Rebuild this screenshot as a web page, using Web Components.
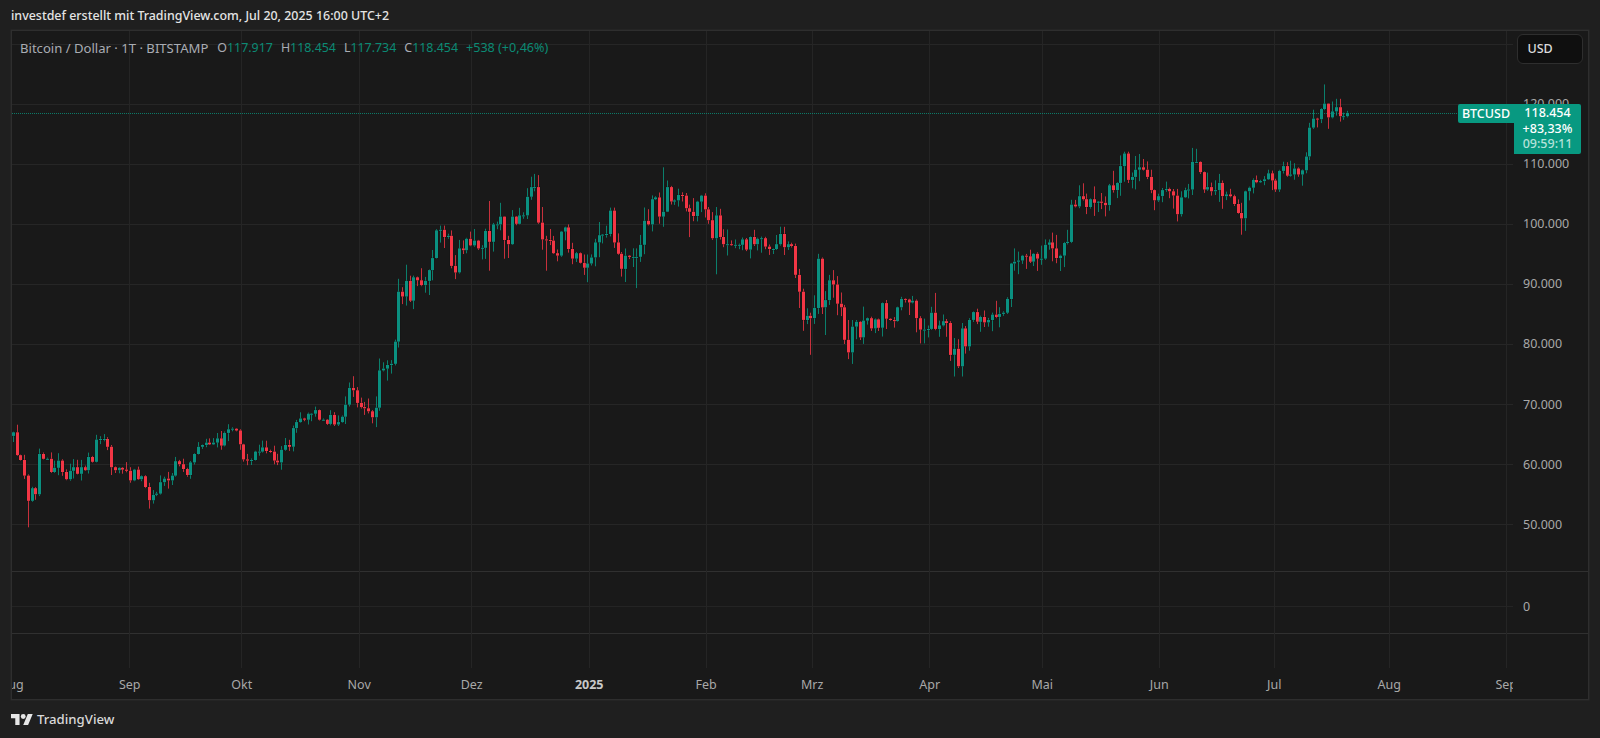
<!DOCTYPE html>
<html lang="de"><head><meta charset="utf-8"><title>BTCUSD</title>
<style>html,body{margin:0;padding:0;background:#1f1f1f;height:100%;overflow:hidden}</style>
</head><body>
<tv-page>
  <tv-header slot="header">investdef erstellt mit TradingView.com, Jul 20, 2025 16:00 UTC+2</tv-header>
  <tv-chart slot="chart"></tv-chart>
  <tv-footer slot="footer"></tv-footer>
</tv-page>
<script>
const FONT='"Noto Sans","Open Sans",sans-serif';
function shadow(el,html){el.attachShadow({mode:'open'}).innerHTML=html;}

customElements.define('tv-page',class extends HTMLElement{constructor(){super();shadow(this,`<style>
:host{display:flex;flex-direction:column;width:1600px;height:738px;box-sizing:border-box;padding:0 11px 0 11px;background:#1f1f1f;font-family:${FONT}}
</style><slot name="header"></slot><slot name="chart"></slot><slot name="footer"></slot>`);}});

customElements.define('tv-header',class extends HTMLElement{constructor(){super();shadow(this,`<style>
:host{display:flex;align-items:center;height:30px;flex:none;font-size:12.45px;font-weight:500;color:#e4e4e4;white-space:nowrap;padding-top:.5px;box-sizing:border-box}
</style><slot></slot>`);}});

customElements.define('tv-footer',class extends HTMLElement{constructor(){super();shadow(this,`<style>
:host{display:flex;align-items:center;gap:4px;flex:none;height:38px;color:#d9d9d9;font-size:13.2px;font-weight:500}
svg{display:block;width:22px;height:11px;fill:#e6e6e6}
</style><svg viewBox="0 4 36 18" aria-hidden="true"><path d="M14 22H7V11H0V4h14v18zM28 22h-8l7.5-18h8L28 22z"/><circle cx="20" cy="8" r="4"/></svg><span>TradingView</span>`);}});

customElements.define('tv-legend',class extends HTMLElement{constructor(){super();shadow(this,`<style>
:host{position:absolute;left:8px;top:9px;display:flex;gap:8px;font-size:12.4px;line-height:16px;color:#a9acb3;white-space:nowrap}
.n{font-size:13.1px;margin-right:1px}
b{font-weight:400;color:#0b8a74}
b.c{font-size:12.6px}
</style><span class="n">Bitcoin / Dollar · 1T · BITSTAMP</span><span>O<b>117.917</b></span><span>H<b>118.454</b></span><span>L<b>117.734</b></span><span>C<b>118.454</b></span><b class="c">+538 (+0,46%)</b>`);}});

customElements.define('tv-last-price',class extends HTMLElement{constructor(){super();shadow(this,`<style>
:host{position:absolute;left:-55px;top:72.5px;display:flex;align-items:flex-start;font-size:12.5px;font-weight:500;color:#fff;white-space:nowrap}
.tag{width:56px;height:19px;background:#089981;border-radius:2px 0 0 2px;display:flex;align-items:center;justify-content:center;box-sizing:border-box}
.box{width:67px;height:50px;background:#089981;border-radius:0 2px 2px 0;display:flex;flex-direction:column;align-items:center;justify-content:center;line-height:15.5px}
.t{color:#b5e2da}
</style><div class="tag">BTCUSD</div><div class="box"><span>118.454</span><span>+83,33%</span><span class="t">09:59:11</span></div>`);}});

customElements.define('tv-currency',class extends HTMLElement{constructor(){super();shadow(this,`<style>
:host{position:absolute;left:4px;top:2.5px;width:66px;height:30px;box-sizing:border-box;background:#0f0f0f;border:1.5px solid #2e2e2e;border-radius:6px;display:flex;align-items:center;padding-left:9.5px;font-size:12.5px;font-weight:500;color:#dcdcdc}
</style><slot></slot>`);}});

customElements.define('tv-price-axis',class extends HTMLElement{constructor(){super();
const t=['120.000','110.000','100.000','90.000','80.000','70.000','60.000','50.000'];
shadow(this,`<style>
:host{position:relative;display:flex;flex-direction:column;height:100%;font-size:12.5px;color:#a8a8a8;padding-left:10px;box-sizing:border-box}
.top{height:42.5px;flex:none}
.tick{height:60.1px;flex:none;display:flex;align-items:center}
.gap{height:16.7px;flex:none}
.sep{height:63.5px;margin-left:-10px;padding:8px 0 0 10px;flex:none;box-sizing:border-box;border-top:1px solid #303030;border-bottom:1px solid #303030;display:flex;align-items:center}
</style><div class="top"></div>${t.map(x=>`<div class="tick">${x}</div>`).join('')}<div class="gap"></div><div class="sep">0</div><tv-currency>USD</tv-currency><tv-last-price></tv-last-price>`);}});

customElements.define('tv-time-axis',class extends HTMLElement{constructor(){super();
const m=[['Aug',12.8],['Sep',130.5],['Okt',242.5],['Nov',360],['Dez',472.5],['2025',590,1],['Feb',707],['Mrz',813],['Apr',930.5],['Mai',1043],['Jun',1160],['Jul',1275],['Aug',1390],['Sep',1507]];
const cols=m.map((e,i)=>(i<m.length-1?m[i+1][1]-e[1]:1513-e[1])+'px').join(' ');
shadow(this,`<style>
:host{display:grid;grid-template-columns:${cols};height:31px;overflow:hidden;font-size:12.5px;color:#a8a8a8;align-items:center;padding-top:1px;box-sizing:border-box}
span{width:0;display:flex;justify-content:center;white-space:nowrap}
b{font-weight:700;color:#c8c8c8}
i{font-style:normal}
</style>${m.map(e=>`<span>${e[2]?`<b>${e[0]}</b>`:`<i>${e[0]}</i>`}</span>`).join('')}`);}});

const CLOSES=[
65.3,61.5,60.7,58.1,53.9,56.0,55.0,61.7,60.9,60.9,58.7,59.4,60.6,58.7,57.5,58.9,59.5,58.4,59.5,59.0,61.2,60.4,64.1,64.2,64.2,62.9,59.5,59.0,59.4,59.1,58.9,
57.3,59.1,57.5,58.0,56.2,54.0,54.9,55.1,57.0,57.6,57.3,58.1,60.5,60.0,59.2,58.2,60.3,61.7,62.9,63.2,63.6,63.3,63.6,64.3,63.1,65.2,65.8,65.9,65.6,63.3,
60.8,60.6,60.7,62.1,62.1,62.8,62.2,62.1,60.6,60.3,62.4,63.2,62.9,66.0,67.0,67.6,67.4,68.4,68.4,69.0,67.4,67.4,66.7,68.2,66.6,67.0,67.9,69.9,72.7,72.3,70.2,
69.5,69.3,68.8,67.8,69.4,75.6,75.9,76.5,76.7,80.4,88.7,87.9,90.5,87.2,91.1,90.6,89.8,90.5,92.3,94.3,98.9,99.0,97.8,98.0,93.0,91.9,95.9,95.6,97.5,96.4,
97.2,95.9,96.0,98.8,97.0,99.9,99.9,101.2,97.3,96.6,101.2,100.0,101.4,101.4,104.5,106.1,106.1,100.2,97.4,97.3,97.2,95.1,94.7,98.7,99.4,95.8,94.2,95.1,93.5,92.7,93.4,
94.4,96.9,98.1,98.2,98.3,102.2,96.9,95.0,92.5,94.7,94.5,94.5,94.5,96.5,100.5,99.9,104.1,104.4,101.2,102.0,106.1,103.7,103.9,104.8,104.7,102.6,102.0,101.3,103.7,104.7,102.4,
100.6,97.6,101.4,97.8,96.6,96.6,96.5,96.5,96.5,97.4,95.7,97.8,96.6,97.5,97.6,96.2,95.8,95.8,96.6,98.3,96.1,96.6,96.3,91.5,88.7,84.0,84.7,84.3,
86.0,94.2,86.1,87.3,90.6,89.9,86.7,86.1,80.7,78.6,82.9,83.7,81.1,83.9,84.3,82.6,84.1,82.7,86.8,84.2,84.0,83.8,86.1,87.5,87.4,86.9,87.2,84.3,82.4,82.4,82.5,
85.2,82.5,83.1,83.8,83.5,78.2,79.2,76.3,82.6,79.6,84.0,85.3,83.7,84.5,83.6,84.0,84.9,84.5,85.0,85.2,87.5,93.4,93.7,93.9,94.7,94.6,93.7,95.0,94.2,94.2,
96.5,96.9,95.9,94.3,94.7,96.8,97.0,103.2,102.9,104.6,104.1,102.8,104.1,103.5,103.7,103.5,103.1,106.4,105.6,106.8,109.6,111.7,107.3,107.8,109.0,109.4,109.0,107.8,105.6,103.9,104.6,
105.6,105.8,105.4,104.7,101.6,104.4,105.6,105.7,110.3,110.3,108.6,105.7,106.1,105.4,105.6,106.8,104.6,104.9,104.6,103.3,101.8,100.9,105.4,106.0,107.3,106.9,107.1,107.4,108.4,107.2,
105.7,108.8,109.6,108.0,108.2,109.2,108.2,108.9,111.2,116.0,117.5,117.4,119.1,120.0,117.7,118.7,119.4,117.9,117.9,118.45];
const OV={4:[58.3,49.5],7:[62.6,54.7],22:[64.9,60.3],24:[65,63.8],26:[63.2,58.2],36:[56.9,52.6],89:[73.6,69.6],95:[69,66.8],104:[93.2,86.4],116:[98.9,92.6],117:[94.8,90.8],126:[103.8,92.2],130:[101.2,94.2],131:[98,94.3],138:[108.3,105.4],139:[108.1,100],140:[102.8,95.7],141:[98,92.2],147:[99.9,95.2],151:[94.9,91.5],158:[102.7,97.9],159:[102.7,96],161:[95.3,91.2],165:[95.9,89.3],172:[109.4,99.5],173:[107.2,103],174:[106.3,103.2],179:[103.2,97.8],184:[102.8,100],186:[102.8,91.6],187:[102.5,97.4],188:[99.1,96.1],204:[99.5,94.8],208:[92.5,86],209:[89.2,82.2],211:[85.2,78.2],213:[95,85],214:[94.4,85],215:[88.8,81.5],216:[91.5,86.5],217:[92.3,87.7],218:[91.3,84.8],220:[86.5,80],221:[84,77.5],222:[84,76.7],223:[84,80.8],244:[88.5,82.3],245:[83.9,81.2],248:[83.8,77.2],249:[81,74.6],250:[80.8,76],251:[83.5,74.6],252:[83,78.4],253:[84.3,78.9],273:[97.4,94],280:[104,96.8],294:[112,107],295:[112,106.8],308:[105.8,100.4],309:[105.4,101.2],314:[110.4,108.3],325:[103.5,98.2],334:[107.5,105.3],342:[111.9,108.4],343:[116.8,110.6],347:[123.2,118.9],348:[120,115.8],350:[120.8,118],351:[120.8,117],352:[118.5,117.3],353:[118.8,117.7]};

customElements.define('tv-pane',class extends HTMLElement{constructor(){super();
const W=1501,H=637,ox=-12.6,oy=-31;
const x=i=>12.8+i*3.78+ox+.6, y=p=>103.6+(120-p)*6.01+oy;
let s=12345;const rnd=()=>(s=(s*16807)%2147483647)/2147483647;
const V=[130,242,360,472,590,707,813,930,1043,1160,1275,1390,1507];
let g='';
for(let p=130;p>=50;p-=10){const Y=Math.round(y(p))+.5;g+=`<line x1="0" x2="${W}" y1="${Y}" y2="${Y}" stroke="#262626"/>`;}
[540.5,602.5].forEach(Y=>g+=`<line x1="0" x2="${W}" y1="${Y}" y2="${Y}" stroke="#303030"/>`);
g+=`<line x1="0" x2="${W}" y1="575.5" y2="575.5" stroke="#242424"/>`;
V.forEach(v=>{const X=Math.round(v+ox)+.5;g+=`<line x1="${X}" x2="${X}" y1="0" y2="${H}" stroke="#252525"/>`;});
let c='';
let prev=64.7;
CLOSES.forEach((cl,i)=>{
  const o=prev;prev=cl;
  const up=cl>=o,col=up?'#089981':'#f23645';
  const r1=rnd(),r2=rnd();
  const scale=i<90?1.3:2.4;
  let hi=Math.max(o,cl)+.1+r1*r1*scale, lo=Math.min(o,cl)-.1-r2*r2*scale;
  if(OV[i]){hi=Math.max(OV[i][0],Math.max(o,cl));lo=Math.min(OV[i][1],Math.min(o,cl));}
  const X=Math.round(x(i));
  const yt=y(Math.max(o,cl)),yb=y(Math.min(o,cl));
  c+=`<rect x="${X}" y="${y(hi).toFixed(1)}" width="1" height="${(y(lo)-y(hi)).toFixed(1)}" fill="${col}" opacity=".8"/>`;
  c+=`<rect x="${X-1}" y="${yt.toFixed(1)}" width="3" height="${Math.max(1,yb-yt).toFixed(1)}" fill="${up?'#0a9080':col}" stroke="#0e0e0e" stroke-opacity=".6" stroke-width=".6" paint-order="stroke"/>`;
});
const py=Math.round(y(118.454))+.5;
shadow(this,`<style>
:host{display:block;position:relative;height:100%;overflow:hidden}
svg{display:block;width:${W}px;height:${H}px}
</style><svg viewBox="0 0 ${W} ${H}" aria-hidden="true">${g}<line x1="0" x2="1446" y1="${py}" y2="${py}" stroke="#089981" stroke-dasharray="1 1" opacity=".75"/>${c}</svg><tv-legend></tv-legend>`);}});

customElements.define('tv-chart',class extends HTMLElement{constructor(){super();shadow(this,`<style>
:host{display:grid;grid-template-columns:1501px 1fr;grid-template-rows:637px 31px;flex:none;height:670px;box-sizing:border-box;background:#191919;border:1px solid #2e2e2e;box-shadow:0 0 0 .5px #2a2a2a}
</style><tv-pane></tv-pane><tv-price-axis style="grid-row:1 / span 2;grid-column:2"></tv-price-axis><tv-time-axis style="grid-row:2;grid-column:1"></tv-time-axis>`);}});
</script>
</body></html>
